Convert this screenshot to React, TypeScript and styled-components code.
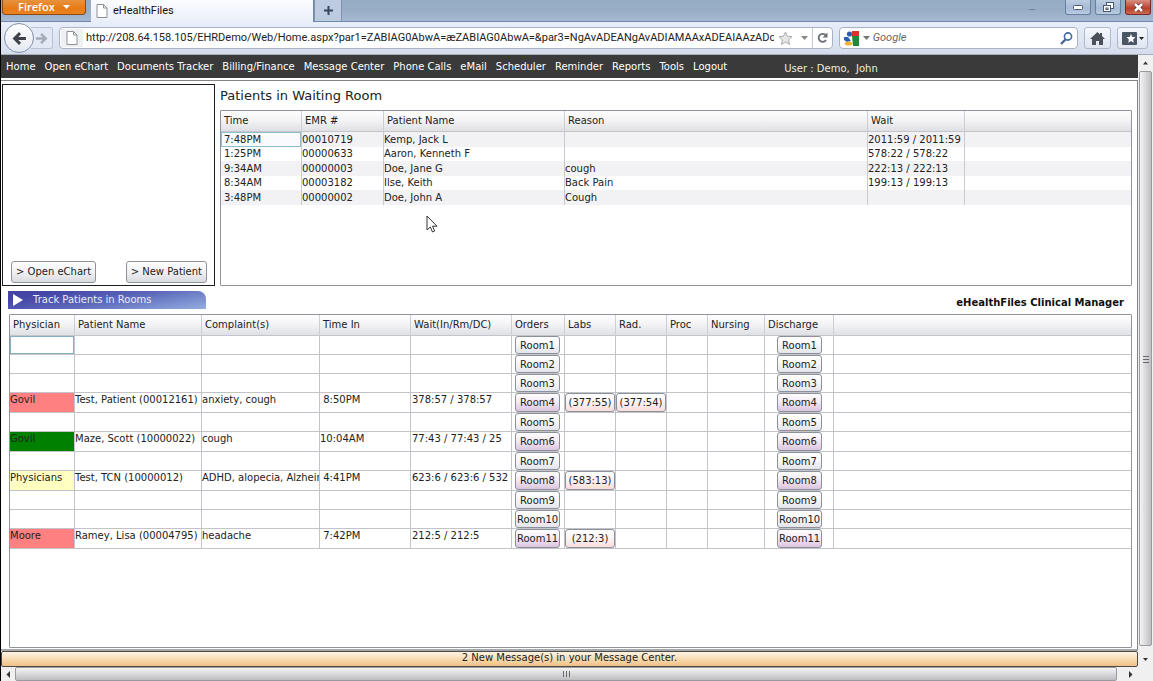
import React from 'react';
import styled, { createGlobalStyle, css } from 'styled-components';

const Global = createGlobalStyle`
  *, *::before, *::after { box-sizing: border-box; }
  html, body { margin: 0; padding: 0; background: #fff; }
  body { font: 10px/14px "DejaVu Sans", Verdana, sans-serif; color: #222; }
  button, input { font: inherit; color: inherit; margin: 0; padding: 0; }
  svg { display: block; flex: none; }
`;

/* ---------- browser window ---------- */

const Window = styled.div`
  display: flex;
  flex-direction: column;
  min-height: 100vh;
  border-left: 1px solid #000;
  overflow: hidden;
`;

const TitleBar = styled.header`
  display: flex;
  align-items: flex-start;
  height: 22px;
  padding-left: 1px;
  background: linear-gradient(#96abc4, #98adc6 50%, #a6bad4);
  border-bottom: 1px solid #7089ab;
`;

const FirefoxButton = styled.button`
  display: flex;
  align-items: center;
  justify-content: center;
  gap: 8px;
  width: 84px;
  height: 15px;
  border: 1px solid #8d4a12;
  border-top: 0;
  border-radius: 0 0 4px 4px;
  background: linear-gradient(#e8923f, #e87a14 60%, #e9841f);
  color: #fff;
  font: 600 11px/14px "Open Sans", "Segoe UI", sans-serif;
`;

const Tab = styled.div`
  display: flex;
  align-items: center;
  gap: 5px;
  width: 223px;
  height: 22px;
  margin-left: 5px;
  padding-left: 5px;
  background: linear-gradient(#fbfcfe, #e9effa);
  border-right: 1px solid #7089ab;
  color: #111;
  font: 11px/16px Roboto, "Segoe UI", sans-serif;
`;

const NewTab = styled.button`
  display: grid;
  place-items: center;
  width: 28px;
  height: 21px;
  border: 1px solid #7d93b1;
  border-width: 0 1px;
  background: #bccbe0;
`;

const WindowControls = styled.div`
  display: flex;
  gap: 4px;
  margin-left: auto;
  padding-right: 2px;
`;

const WindowButton = styled.button<{ $danger?: boolean }>`
  display: grid;
  place-items: center;
  width: 26px;
  height: 15px;
  border: 1px solid ${p => (p.$danger ? '#7a2a2a' : '#64809f')};
  border-top: 0;
  border-radius: 0 0 3px 3px;
  background: ${p =>
    p.$danger
      ? 'linear-gradient(#d88f83, #b9402b 60%, #cf6a50)'
      : 'linear-gradient(#bccde2, #a5bad4 60%, #bccde2)'};
`;

const Dash = styled.span`
  width: 6px;
  height: 1px;
  margin: 9px 26px 0 0;
  background: #6f87a6;
`;

const Toolbar = styled.div`
  display: flex;
  align-items: center;
  height: 33px;
  padding: 0 5px 0 3px;
  background: linear-gradient(#e8eefa, #d5dded);
  border-bottom: 1px solid #a5aebd;
`;

const BackButton = styled.button`
  display: grid;
  place-items: center;
  width: 30px;
  height: 30px;
  border: 1px solid #8591a6;
  border-radius: 50%;
  background: linear-gradient(#fff, #e3e8f1);
  z-index: 1;
`;

const ForwardButton = styled.button`
  display: grid;
  place-items: center;
  width: 22px;
  height: 22px;
  margin-left: -3px;
  border: 1px solid #bac3d3;
  border-left: 0;
  border-radius: 0 3px 3px 0;
  background: #e4eaf5;
`;

const Field = styled.div<{ $wide?: boolean }>`
  display: flex;
  align-items: center;
  height: 22px;
  margin-left: 6px;
  border: 1px solid #a9b2c2;
  border-radius: 4px;
  background: #fff;
  overflow: hidden;
  ${p => (p.$wide ? 'flex: 1; min-width: 0;' : 'width: 239px;')}
`;

const SiteIcon = styled.span`
  display: grid;
  place-items: center;
  width: 22px;
  height: 18px;
  margin: 0 3px 0 1px;
  background: #eff0f3;
`;

const FieldInput = styled.input`
  flex: 1;
  min-width: 0;
  height: 20px;
  border: 0;
  outline: 0;
  background: transparent;
  color: #222;
  font: 11px/20px Roboto, "Segoe UI", sans-serif;
  &::placeholder { color: #666; opacity: 1; font-style: italic; }
`;

const FieldButton = styled.button<{ $divided?: boolean }>`
  display: grid;
  place-items: center;
  height: 20px;
  padding: 0 4px;
  border: 0;
  border-left: ${p => (p.$divided ? '1px solid #c3c9d4' : '0')};
  background: transparent;
`;

const ToolButton = styled.button<{ $wide?: boolean }>`
  display: flex;
  align-items: center;
  justify-content: center;
  gap: 2px;
  width: ${p => (p.$wide ? 31 : 27)}px;
  height: 22px;
  margin-left: 6px;
  border: 1px solid #b0b9ca;
  border-radius: 3px;
  background: linear-gradient(#f5f8fd, #dfe6f1);
`;

/* ---------- page frame and scroll bars ---------- */

const Viewport = styled.div`
  display: flex;
  flex: 1;
`;

const Page = styled.div`
  display: flex;
  flex-direction: column;
  flex: 1;
  min-width: 0;
`;

const ScrollBar = styled.div<{ $horizontal?: boolean }>`
  display: flex;
  flex-direction: ${p => (p.$horizontal ? 'row' : 'column')};
  background: #f0f0f1;
  ${p =>
    p.$horizontal
      ? css`
          height: 14px;
          padding-right: 16px;
        `
      : css`
          width: 15px;
          padding: 0 1px;
        `}
`;

const ScrollArrow = styled.button<{ $horizontal?: boolean }>`
  display: grid;
  place-items: center;
  border: 0;
  background: transparent;
  ${p => (p.$horizontal ? 'width: 14px; height: 14px;' : 'width: 13px; height: 16px;')}
`;

const ScrollThumb = styled.div<{ $horizontal?: boolean }>`
  display: grid;
  place-items: center;
  flex: 1;
  border: 1px solid #9a9aa0;
  border-radius: 2px;
  background: linear-gradient(
    ${p => (p.$horizontal ? '' : '90deg,')} #f4f4f4,
    #dcdcdf 45%,
    #bebec2
  );
  ${p => (p.$horizontal ? 'margin-right: 6px;' : 'margin-bottom: 5px;')}
`;

/* ---------- application ---------- */

const MenuBar = styled.nav`
  display: flex;
  align-items: center;
  gap: 9px;
  height: 23px;
  margin-bottom: 2px;
  padding-left: 5px;
  background: #3a3a3a;
  color: #fff;
`;

const MenuLink = styled.a`
  color: #fff;
  text-decoration: none;
  white-space: nowrap;
`;

const UserName = styled.span`
  margin-left: 48px;
  padding-top: 4px;
  color: #f3ecdf;
  white-space: pre;
`;

const Content = styled.main`
  display: flex;
  flex-direction: column;
  flex: 1;
  padding: 3px 5px 1px 0;
  border-top: 1px solid #858585;
  border-right: 1px solid #858585;
  border-bottom: 2px solid #a3a9ad;
`;

const TopRow = styled.section`
  display: flex;
  gap: 5px;
  padding-left: 1px;
`;

const ChartBox = styled.div`
  display: flex;
  align-items: flex-end;
  justify-content: space-between;
  flex: none;
  width: 213px;
  height: 202px;
  padding: 0 7px 2px 8px;
  border: 1px solid #1d1d1d;
`;

const PushButton = styled.button`
  height: 22px;
  padding: 0 4px;
  border: 1px solid #8f949b;
  border-radius: 3px;
  background: linear-gradient(#fff, #f1f1f4 50%, #d9dae0);
  white-space: nowrap;
`;

const Waiting = styled.div`
  display: flex;
  flex-direction: column;
  flex: 1;
  min-width: 0;
`;

const WaitingTitle = styled.h1`
  margin: 0;
  padding: 4px 0 6px;
  font-size: 13px;
  line-height: 16px;
  font-weight: 400;
`;

const GridBox = styled.div`
  flex: 1;
  border: 1px solid #8e9499;
  border-radius: 1px;
  overflow: hidden;
`;

const Grid = styled.table`
  width: 100%;
  table-layout: fixed;
  border-collapse: separate;
  border-spacing: 0;
`;

const HeadCell = styled.th`
  height: 21px;
  padding: 0 0 0 3px;
  border-right: 1px solid #cdced3;
  border-bottom: 1px solid #c3c5cb;
  background: linear-gradient(#fdfdfd, #f4f4f6 45%, #dfe0e4);
  font-weight: 400;
  text-align: left;
  white-space: nowrap;
  &:last-child { border-right: 0; }
`;

const WaitCell = styled.td<{ $selected?: boolean }>`
  padding: 0;
  border-right: 1px solid #c9cad0;
  white-space: nowrap;
  &:first-child { padding-left: 3px; }
  &:last-child { border-right: 0; }
  ${p =>
    p.$selected &&
    css`
      background: #f8fafd;
      box-shadow: inset 0 0 0 1px #8fbdd3;
    `}
`;

const WaitRow = styled.tr`
  height: 14px;
  &:nth-child(odd) { height: 15px; background: #f2f2f5; }
`;

const TrackHead = styled.div`
  display: flex;
  align-items: center;
  justify-content: space-between;
  margin-top: 4px;
  padding: 0 8px 0 7px;
`;

const TrackBanner = styled.h2`
  display: flex;
  align-items: center;
  gap: 10px;
  width: 198px;
  height: 18px;
  margin: 0;
  padding-left: 5px;
  border-radius: 0 8px 0 0;
  background: linear-gradient(170deg, #4344a5 15%, #5a66b9 50%, #93aee0);
  color: #e8ebfa;
  font-size: 10px;
  font-weight: 400;
`;

const ProductName = styled.strong`
  padding-top: 6px;
  color: #111;
  line-height: 14px;
`;

const TrackBox = styled(GridBox)`
  margin: 4px 0 0 8px;
`;

const RoomRow = styled.tr<{ $busy?: boolean }>`
  height: ${p => (p.$busy ? 20 : 19)}px;
`;

const RoomCell = styled.td<{ $selected?: boolean; $offset?: number }>`
  padding: 0 0 0 ${p => p.$offset ?? 0}px;
  border-right: 1px solid #c3c4ca;
  border-bottom: 1px solid #c3c4ca;
  vertical-align: top;
  overflow: hidden;
  white-space: pre;
  &:last-child { border-right: 0; }
  ${p => p.$selected && 'box-shadow: inset 0 0 0 1px #86b0c6;'}
`;

const CellText = styled.span<{ $fill?: string }>`
  display: block;
  height: 19px;
  background: ${p => p.$fill ?? 'transparent'};
  overflow: hidden;
`;

const RoomButton = styled.button<{ $tone: 'plain' | 'violet' | 'rose' }>`
  display: block;
  width: ${p => (p.$tone === 'rose' ? 50 : 45)}px;
  height: ${p => (p.$tone === 'plain' ? 18 : 19)}px;
  padding: 1px 1px 0;
  border: 1px solid #8b9099;
  border-radius: 3px;
  overflow: hidden;
  white-space: nowrap;
  background: ${p =>
    ({
      plain: 'linear-gradient(#fff, #f6f6f8 50%, #e3e4ea)',
      violet: 'linear-gradient(#fdfcfd, #f4ebf4 45%, #dcc4e0)',
      rose: 'linear-gradient(#fff, #fbf3f3 50%, #fbdcdc)',
    })[p.$tone]};
`;

const MessageBar = styled.button`
  height: 16px;
  padding-bottom: 3px;
  border: 1px solid #4f4a44;
  border-radius: 2px;
  background: linear-gradient(#fdf4e6, #f7d9ae 55%, #efc086);
  line-height: 12px;
`;

const Pointer = styled.svg`
  position: absolute;
  left: 426px;
  top: 215px;
`;

/* ---------- data ---------- */

const menu = [
  'Home', 'Open eChart', 'Documents Tracker', 'Billing/Finance', 'Message Center', 'Phone Calls',
  'eMail', 'Scheduler', 'Reminder', 'Reports', 'Tools', 'Logout',
];

const waitingColumns: [string, number?][] = [
  ['Time', 81], ['EMR #', 82], ['Patient Name', 181], ['Reason', 303], ['Wait', 97], [''],
];

const waiting = [
  ['7:48PM', '00010719', 'Kemp, Jack L', '', '2011:59 / 2011:59'],
  ['1:25PM', '00000633', 'Aaron, Kenneth F', '', '578:22 / 578:22'],
  ['9:34AM', '00000003', 'Doe, Jane G', 'cough', '222:13 / 222:13'],
  ['8:34AM', '00003182', 'Ilse, Keith', 'Back Pain', '199:13 / 199:13'],
  ['3:48PM', '00000002', 'Doe, John A', 'Cough', ''],
];

const roomColumns: [string, number?][] = [
  ['Physician', 65], ['Patient Name', 127], ['Complaint(s)', 118], ['Time In', 91],
  ['Wait(In/Rm/DC)', 101], ['Orders', 53], ['Labs', 51], ['Rad.', 51], ['Proc', 41],
  ['Nursing', 57], ['Discharge', 69], [''],
];

interface Visit {
  physician: string;
  color: string;
  patient: string;
  complaint: string;
  timeIn: string;
  wait: string;
  labs?: string;
  rad?: string;
}

const visits: Record<number, Visit> = {
  4: { physician: 'Govil', color: '#ff8080', patient: 'Test, Patient (00012161)', complaint: 'anxiety, cough', timeIn: ' 8:50PM', wait: '378:57 / 378:57', labs: '(377:55)', rad: '(377:54)' },
  6: { physician: 'Govil', color: '#008000', patient: 'Maze, Scott (10000022)', complaint: 'cough', timeIn: '10:04AM', wait: '77:43 / 77:43 / 25' },
  8: { physician: 'Physicians', color: '#ffffc0', patient: 'Test, TCN (10000012)', complaint: 'ADHD, alopecia, Alzheim', timeIn: ' 4:41PM', wait: '623:6 / 623:6 / 532', labs: '(583:13)' },
  11: { physician: 'Moore', color: '#ff8080', patient: 'Ramey, Lisa (00004795)', complaint: 'headache', timeIn: ' 7:42PM', wait: '212:5 / 212:5', labs: '(212:3)' },
};

const rooms = Array.from({ length: 11 }, (_, i) => i + 1);

/* ---------- icons ---------- */

const Caret = ({ color = '#777' }: { color?: string }) => (
  <svg width="7" height="4" viewBox="0 0 7 4"><path d="M0 0h7L3.500 4z" fill={color} /></svg>
);

const Sheet = () => (
  <svg width="12" height="14" viewBox="0 0 12 14">
    <path d="M1 .5h6.500L11 4v9.500H1z" fill="#fff" stroke="#8d9096" />
    <path d="M7.500.5V4H11" fill="none" stroke="#8d9096" />
  </svg>
);

const Arrow = ({ flip, color, size }: { flip?: boolean; color: string; size: number }) => (
  <svg width={size} height={size} viewBox="0 0 14 14">
    <path
      d={flip ? 'M1 7h10M6.500 2l5 5-5 5' : 'M13 7H3M7.500 2l-5 5 5 5'}
      fill="none" stroke={color} strokeWidth="2.800"
    />
  </svg>
);

const points = { up: 'M1 4.500L3.500 1.500 6 4.500z', down: 'M1 2L3.500 5 6 2z', left: 'M5 0L1.500 3.500 5 7z', right: 'M2 0l3.500 3.500L2 7z' };

const Tip = ({ to }: { to: keyof typeof points }) => (
  <svg width="7" height="7" viewBox="0 0 7 7"><path d={points[to]} fill="#333" /></svg>
);

const Grip = ({ horizontal }: { horizontal?: boolean }) => (
  <svg width="8" height="8" viewBox="0 0 8 8">
    <path d={horizontal ? 'M1.500 1v6M4.500 1v6M7.500 1v6' : 'M1 1.500h6M1 4.500h6M1 7.500h6'} stroke="#66666c" />
  </svg>
);

/* ---------- parts ---------- */

const Columns = ({ of: columns }: { of: [string, number?][] }) => (
  <>
    <colgroup>{columns.map(([name, width]) => <col key={name} width={width} />)}</colgroup>
    <thead>
      <tr>{columns.map(([name]) => <HeadCell key={name} scope="col">{name}</HeadCell>)}</tr>
    </thead>
  </>
);

const Chrome = () => (
  <>
    <TitleBar>
      <FirefoxButton>Firefox <Caret color="#fff" /></FirefoxButton>
      <Tab><Sheet />eHealthFiles</Tab>
      <NewTab aria-label="New tab">
        <svg width="9" height="9" viewBox="0 0 9 9"><path d="M4.500 0v9M0 4.500h9" stroke="#38465c" strokeWidth="2" /></svg>
      </NewTab>
      <WindowControls>
        <Dash />
        <WindowButton aria-label="Minimize">
          <svg width="10" height="5" viewBox="0 0 10 5"><rect x=".5" y=".5" width="9" height="4" rx="1" fill="#fff" stroke="#4a5870" /></svg>
        </WindowButton>
        <WindowButton aria-label="Restore">
          <svg width="11" height="11" viewBox="0 0 11 11" fill="#fff" stroke="#4a5870">
            <rect x="3.500" y=".5" width="7" height="6" /><rect x=".5" y="3.500" width="7" height="6" /><rect x="3" y="6" width="2" height="1.500" />
          </svg>
        </WindowButton>
        <WindowButton $danger aria-label="Close">
          <svg width="11" height="9" viewBox="0 0 11 9">
            <path d="M2 1l7 7M9 1L2 8" stroke="#5d3030" strokeWidth="4" /><path d="M2 1l7 7M9 1L2 8" stroke="#fff" strokeWidth="2.500" />
          </svg>
        </WindowButton>
      </WindowControls>
    </TitleBar>
    <Toolbar>
      <BackButton aria-label="Back"><Arrow color="#3f4248" size={15} /></BackButton>
      <ForwardButton aria-label="Forward"><Arrow flip color="#a5adb9" size={13} /></ForwardButton>
      <Field $wide>
        <SiteIcon><Sheet /></SiteIcon>
        <FieldInput
          aria-label="Address"
          defaultValue="http://208.64.158.105/EHRDemo/Web/Home.aspx?par1=ZABIAG0AbwA=&aelig;ZABIAG0AbwA=&par3=NgAvADEANgAvADIAMAAxADEAIAAzADoAMwA5ADoA"
        />
        <FieldButton aria-label="Bookmark">
          <svg width="15" height="14" viewBox="0 0 15 14">
            <path d="M7.500 1l1.900 4.200 4.600.5-3.400 3.100 1 4.600-4.100-2.300-4.100 2.300 1-4.600L1 5.700l4.600-.5z" fill="#e6e6e6" stroke="#a9abaf" />
          </svg>
        </FieldButton>
        <FieldButton aria-label="History"><Caret color="#888" /></FieldButton>
        <FieldButton $divided aria-label="Reload">
          <svg width="11" height="12" viewBox="0 0 11 12">
            <path d="M8.500 3A4 4 0 1 0 9 8" fill="none" stroke="#6b6e74" strokeWidth="1.800" /><path d="M10.500.5V5.500H5.500z" fill="#6b6e74" />
          </svg>
        </FieldButton>
      </Field>
      <Field>
        <FieldButton aria-label="Search engine">
          <svg width="15" height="15" viewBox="0 0 15 15">
            <rect width="15" height="15" fill="#fff" /><path d="M8 0h7v6H8z" fill="#d8362a" /><path d="M8 5h7v10H9z" fill="#22893a" />
            <circle cx="5.500" cy="3" r="2.600" fill="#2b5fb4" /><path d="M0 6l4 0 3 4-4 1-3-2z" fill="#2b5fb4" />
            <ellipse cx="4.500" cy="12.500" rx="3.800" ry="2" fill="#f2b630" />
          </svg>
        </FieldButton>
        <Caret />
        <FieldInput aria-label="Search" placeholder=" Google" />
        <FieldButton aria-label="Search">
          <svg width="13" height="13" viewBox="0 0 13 13" fill="none" stroke="#44679f">
            <circle cx="8" cy="4.500" r="3.600" strokeWidth="1.600" /><path d="M5.500 7.500L1 12" strokeWidth="2.400" />
          </svg>
        </FieldButton>
      </Field>
      <ToolButton aria-label="Home page">
        <svg width="15" height="13" viewBox="0 0 15 13"><path d="M7.500 0L0 7h2v6h4V9h3v4h4V7h2L12 4V1h-2v1.500z" fill="#4c5159" /></svg>
      </ToolButton>
      <ToolButton $wide aria-label="Bookmarks">
        <svg width="15" height="13" viewBox="0 0 15 13">
          <rect width="15" height="13" rx="1" fill="#4c5564" />
          <path d="M9 2l1.300 3 3.200.3-2.400 2.200.7 3.200L9 9l-2.800 1.700.7-3.200L4.500 5.300 7.700 5z" fill="#fff" />
        </svg>
        <svg width="5" height="3" viewBox="0 0 5 3"><path d="M0 0h5L2.500 3z" fill="#222" /></svg>
      </ToolButton>
    </Toolbar>
  </>
);

const RoomLine = ({ room }: { room: number }) => {
  const visit = visits[room];
  const tone = visit ? 'violet' : 'plain';
  return (
    <RoomRow $busy={!!visit}>
      <RoomCell $selected={room === 1}>{visit && <CellText $fill={visit.color}>{visit.physician}</CellText>}</RoomCell>
      <RoomCell>{visit && <CellText>{visit.patient}</CellText>}</RoomCell>
      <RoomCell>{visit && <CellText>{visit.complaint}</CellText>}</RoomCell>
      <RoomCell>{visit && <CellText>{visit.timeIn}</CellText>}</RoomCell>
      <RoomCell $offset={1}>{visit && <CellText>{visit.wait}</CellText>}</RoomCell>
      <RoomCell $offset={3}><RoomButton $tone={tone}>Room{room}</RoomButton></RoomCell>
      <RoomCell>{visit?.labs && <RoomButton $tone="rose">{visit.labs}</RoomButton>}</RoomCell>
      <RoomCell>{visit?.rad && <RoomButton $tone="rose">{visit.rad}</RoomButton>}</RoomCell>
      <RoomCell />
      <RoomCell />
      <RoomCell $offset={12}><RoomButton $tone={tone}>Room{room}</RoomButton></RoomCell>
      <RoomCell />
    </RoomRow>
  );
};

export default function App() {
  return (
    <Window>
      <Global />
      <Chrome />
      <Viewport>
        <Page>
          <MenuBar>
            {menu.map(item => <MenuLink key={item} href="#">{item}</MenuLink>)}
            <UserName>{'User : Demo,  John'}</UserName>
          </MenuBar>
          <Content>
            <TopRow>
              <ChartBox>
                <PushButton>&gt; Open eChart</PushButton>
                <PushButton>&gt; New Patient</PushButton>
              </ChartBox>
              <Waiting>
                <WaitingTitle>Patients in Waiting Room</WaitingTitle>
                <GridBox>
                  <Grid>
                    <Columns of={waitingColumns} />
                    <tbody>
                      {waiting.map((row, r) => (
                        <WaitRow key={row[1]}>
                          {row.map((value, c) => <WaitCell key={c} $selected={r === 0 && c === 0}>{value}</WaitCell>)}
                          <WaitCell />
                        </WaitRow>
                      ))}
                    </tbody>
                  </Grid>
                </GridBox>
              </Waiting>
            </TopRow>
            <TrackHead>
              <TrackBanner>
                <svg width="10" height="12" viewBox="0 0 10 12"><path d="M0 0l10 6-10 6z" fill="#fff" /></svg>
                Track Patients in Rooms
              </TrackBanner>
              <ProductName>eHealthFiles Clinical Manager</ProductName>
            </TrackHead>
            <TrackBox>
              <Grid>
                <Columns of={roomColumns} />
                <tbody>{rooms.map(room => <RoomLine key={room} room={room} />)}</tbody>
              </Grid>
            </TrackBox>
          </Content>
          <MessageBar>2 New Message(s) in your Message Center.</MessageBar>
        </Page>
        <ScrollBar>
          <ScrollArrow aria-label="Scroll up"><Tip to="up" /></ScrollArrow>
          <ScrollThumb><Grip /></ScrollThumb>
          <ScrollArrow aria-label="Scroll down"><Tip to="down" /></ScrollArrow>
        </ScrollBar>
      </Viewport>
      <ScrollBar $horizontal>
        <ScrollArrow $horizontal aria-label="Scroll left"><Tip to="left" /></ScrollArrow>
        <ScrollThumb $horizontal><Grip horizontal /></ScrollThumb>
        <ScrollArrow $horizontal aria-label="Scroll right"><Tip to="right" /></ScrollArrow>
      </ScrollBar>
      <Pointer width="12" height="18" viewBox="0 0 12 18" aria-hidden="true">
        <path d="M1 1v14l3.300-3 2.200 5 2.200-1-2.200-4.800H11z" fill="#fff" stroke="#333" />
      </Pointer>
    </Window>
  );
}
